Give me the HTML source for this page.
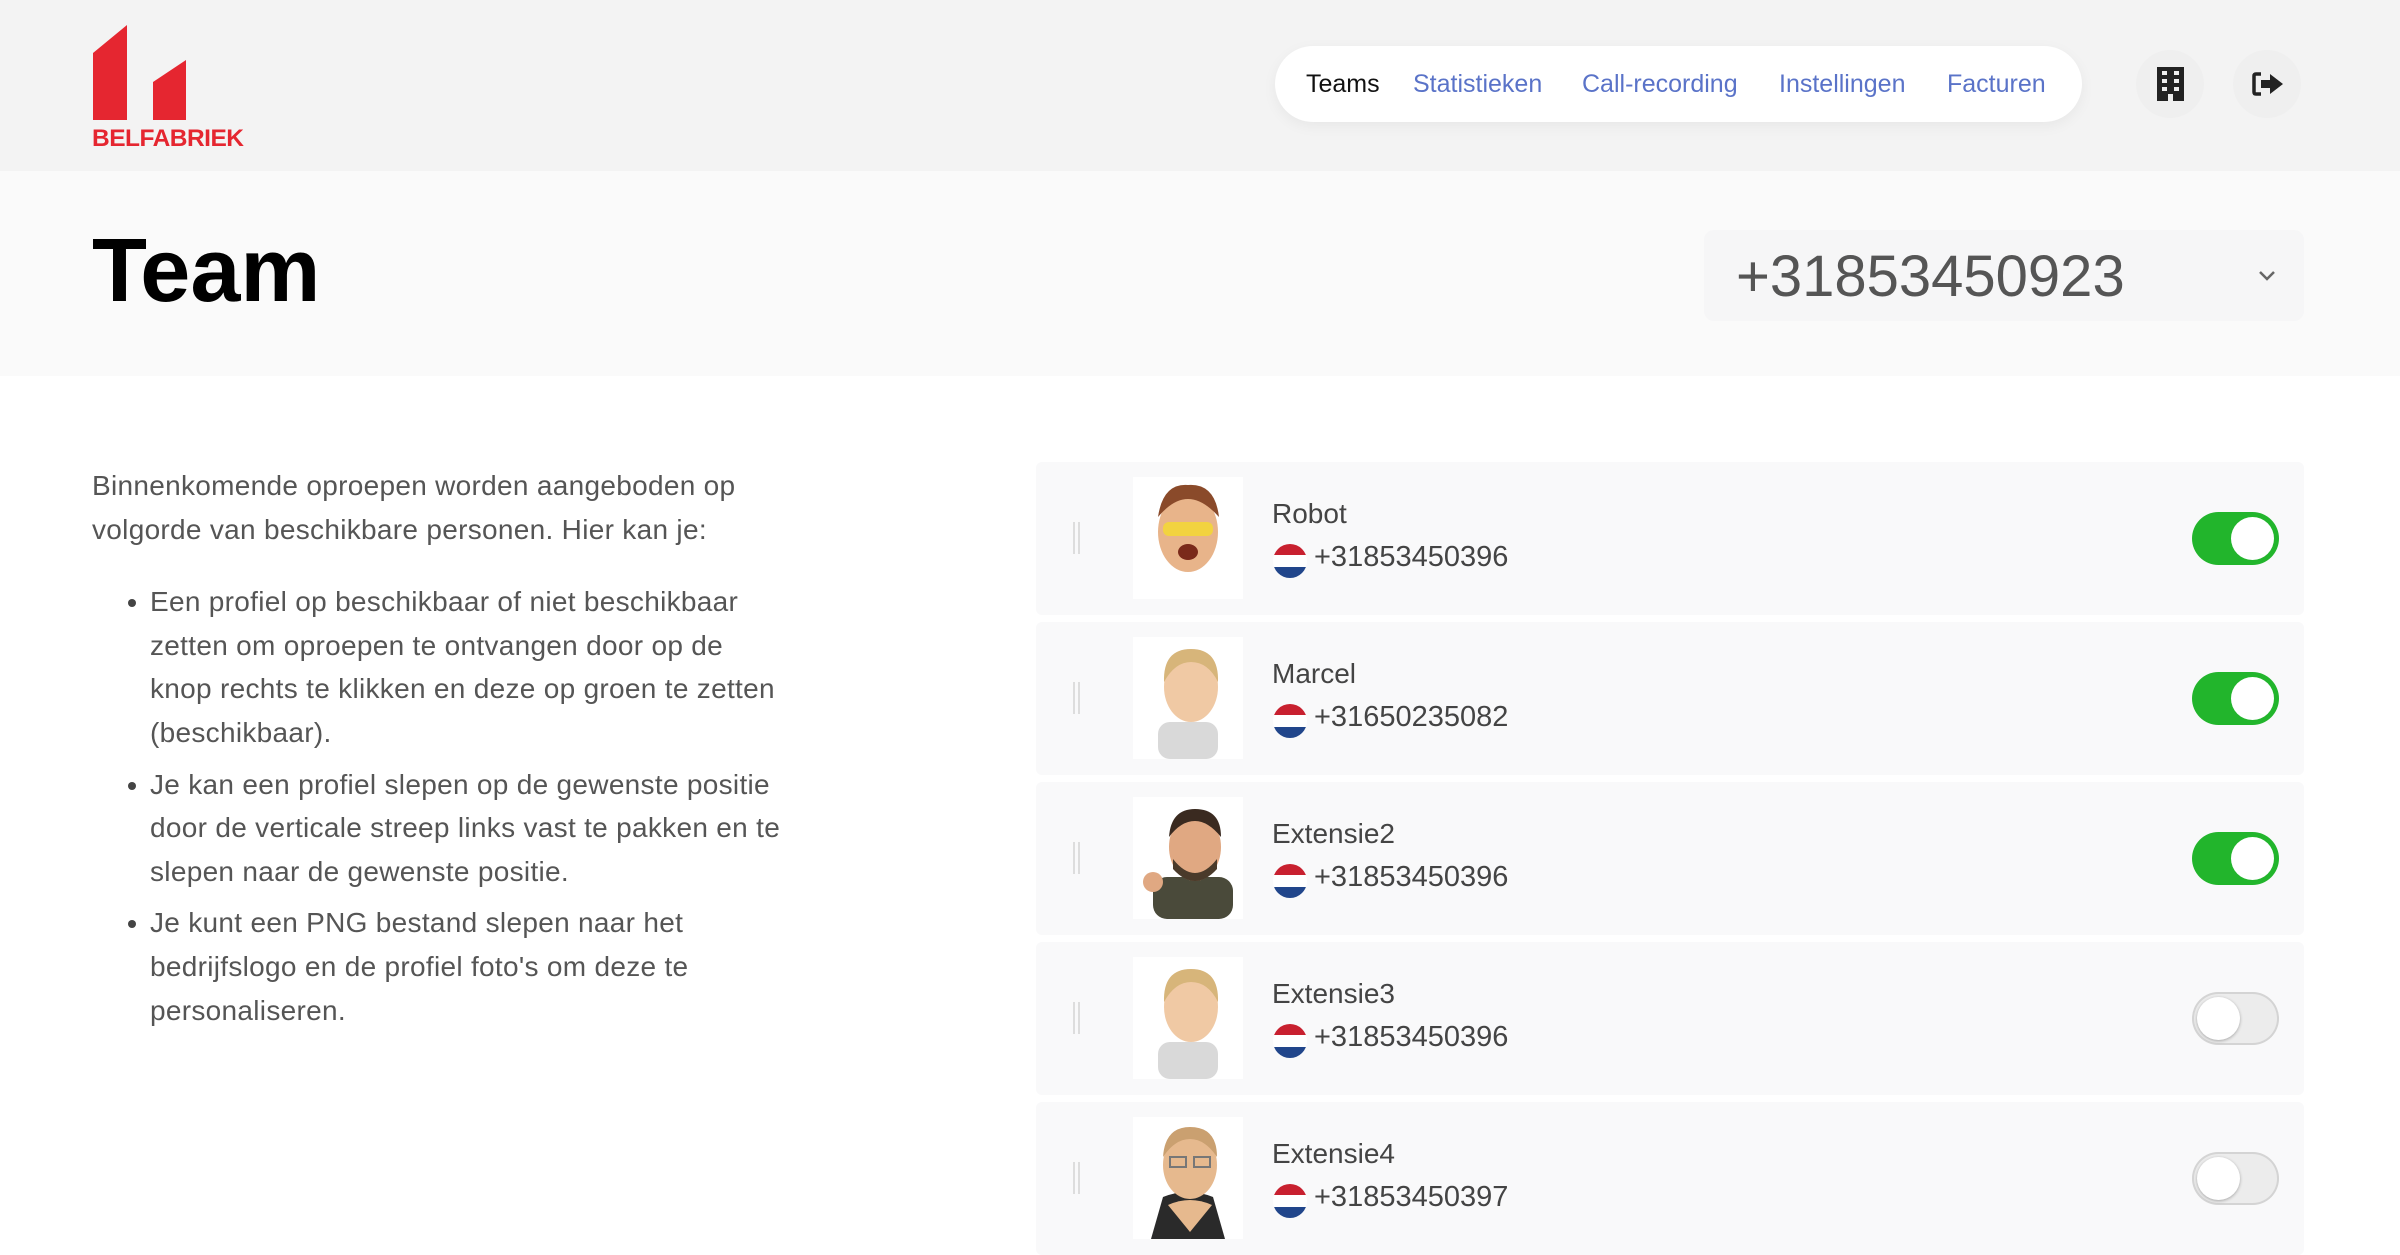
<!DOCTYPE html>
<html><head><meta charset="utf-8"><style>
*{margin:0;padding:0;box-sizing:border-box}
html,body{width:2400px;height:1255px;overflow:hidden;background:#fff;font-family:"Liberation Sans",sans-serif}
.hdr{position:absolute;left:0;top:0;width:2400px;height:171px;background:#f3f3f3}
.band{position:absolute;left:0;top:171px;width:2400px;height:205px;background:#fafafa}
.nav{position:absolute;left:1275px;top:46px;width:807px;height:76px;background:#fff;border-radius:38px;box-shadow:0 4px 14px rgba(0,0,0,.05)}
.nav span{position:absolute;top:24px;font-size:25px;color:#5a73c8;white-space:nowrap}
.ic{position:absolute;top:50px;width:68px;height:68px;border-radius:50%;background:#efefef}
.title{position:absolute;left:92px;top:220px;font-size:90px;font-weight:bold;color:#000;letter-spacing:0}
.dd{position:absolute;left:1704px;top:230px;width:600px;height:91px;background:#f6f6f7;border-radius:10px}
.dd span{position:absolute;left:32px;top:13px;font-size:58px;color:#555}
.txt{position:absolute;left:92px;top:464px;font-size:28px;letter-spacing:0.3px;line-height:43.6px;color:#555;white-space:nowrap}
.txt ul{margin-top:29px;padding-left:58px}
.txt li{margin-bottom:8px;list-style:none;position:relative}
.txt li:before{content:"";position:absolute;left:-22px;top:19px;width:8px;height:8px;border-radius:50%;background:#444}
.row{position:absolute;left:1036px;width:1268px;height:153px;background:#f9f9fa;border-radius:6px}
.row .h{position:absolute;left:37px;top:60px;width:7px;height:32px;border-left:2px solid #ddd;border-right:2px solid #ddd}
.row .av{position:absolute;left:97px;top:15px;width:110px;height:122px;background:#fff}
.row .nm{position:absolute;left:236px;top:36px;font-size:28px;color:#444}
.row .fl{position:absolute;left:237px;top:82px;width:34px;height:34px;border-radius:50%;background:linear-gradient(#c8202f 0 33%,#fff 33% 67%,#21468b 67%)}
.row .ph{position:absolute;left:278px;top:79px;font-size:29px;color:#444}
.tg{position:absolute;left:1156px;top:50px;width:87px;height:53px;border-radius:27px;background:#22b52c}
.tg:after{content:"";position:absolute;right:5px;top:5px;width:43px;height:43px;border-radius:50%;background:#fff}
.tg.off{background:#ececec;box-shadow:inset 0 0 0 2px #d4d4d4}
.tg.off:after{right:auto;left:5px;box-shadow:0 1px 3px rgba(0,0,0,.3)}
</style></head><body>
<div class="hdr"></div><div class="band"></div>
<svg style="position:absolute;left:0;top:0" width="260" height="160">
<polygon points="93,53 127,25 127,120 93,120" fill="#e52630"/>
<polygon points="153,82 186,60 186,120 153,120" fill="#e52630"/>
<text x="92" y="146" font-family="Liberation Sans" font-weight="bold" font-size="24.5" fill="#e52630" textLength="152">BELFABRIEK</text>
</svg>
<div class="nav">
<span style="left:31px;color:#111">Teams</span>
<span style="left:138px">Statistieken</span>
<span style="left:307px">Call-recording</span>
<span style="left:504px">Instellingen</span>
<span style="left:672px">Facturen</span>
</div>
<div class="ic" style="left:2136px"></div><div class="ic" style="left:2233px"></div>
<svg style="position:absolute;left:2157px;top:67px" width="27" height="34" viewBox="0 0 27 34"><rect x="0" y="0" width="27" height="34" fill="#222"/><g fill="#eee"><rect x="5" y="4" width="5" height="4"/><rect x="17" y="4" width="5" height="4"/><rect x="5" y="12" width="5" height="4"/><rect x="17" y="12" width="5" height="4"/><rect x="5" y="20" width="5" height="4"/><rect x="17" y="20" width="5" height="4"/><rect x="11" y="27" width="5" height="7"/></g></svg>
<svg style="position:absolute;left:2252px;top:72px" width="32" height="24" viewBox="0 0 32 24"><path d="M9 2H4Q2 2 2 4V20Q2 22 4 22H9" stroke="#222" stroke-width="3.5" fill="none"/><path d="M9 8H18V2L31 12L18 22V16H9Z" fill="#222"/></svg>
<div class="title">Team</div>
<div class="dd"><span>+31853450923</span>
<svg style="position:absolute;left:554px;top:40px" width="18" height="12"><path d="M2 2L9 9L16 2" stroke="#666" stroke-width="2.5" fill="none"/></svg></div>
<div class="txt">Binnenkomende oproepen worden aangeboden op<br>volgorde van beschikbare personen. Hier kan je:
<ul>
<li>Een profiel op beschikbaar of niet beschikbaar<br>zetten om oproepen te ontvangen door op de<br>knop rechts te klikken en deze op groen te zetten<br>(beschikbaar).</li>
<li>Je kan een profiel slepen op de gewenste positie<br>door de verticale streep links vast te pakken en te<br>slepen naar de gewenste positie.</li>
<li>Je kunt een PNG bestand slepen naar het<br>bedrijfslogo en de profiel foto's om deze te<br>personaliseren.</li>
</ul></div>

<div class="row" style="top:462px"><div class="h"></div><div class="av"><svg width="110" height="122"><ellipse cx="55" cy="55" rx="30" ry="40" fill="#e8b48a"/><path d="M25 40Q30 6 55 8Q82 6 86 40Q70 22 55 22Q40 22 25 40Z" fill="#8a4a2a"/><rect x="30" y="45" width="50" height="14" rx="6" fill="#f2d340"/><ellipse cx="55" cy="75" rx="10" ry="8" fill="#7a2a1a"/></svg></div><div class="nm">Robot</div><div class="fl"></div><div class="ph">+31853450396</div><div class="tg"></div></div>
<div class="row" style="top:622px"><div class="h"></div><div class="av"><svg width="110" height="122"><rect x="25" y="85" width="60" height="37" rx="12" fill="#d9d9d9"/><ellipse cx="58" cy="50" rx="27" ry="35" fill="#f0c9a4"/><path d="M31 45Q30 12 58 12Q86 12 85 45Q75 25 58 25Q42 25 31 45Z" fill="#d7b57a"/></svg></div><div class="nm">Marcel</div><div class="fl"></div><div class="ph">+31650235082</div><div class="tg"></div></div>
<div class="row" style="top:782px"><div class="h"></div><div class="av"><svg width="110" height="122"><rect x="20" y="80" width="80" height="42" rx="14" fill="#4a4a3a"/><ellipse cx="62" cy="50" rx="26" ry="34" fill="#e0a882"/><path d="M36 40Q38 12 62 12Q88 12 88 40Q75 24 62 24Q48 24 36 40Z" fill="#3a2a20"/><path d="M40 62Q62 90 84 62L84 72Q62 96 40 72Z" fill="#4a3a2a"/><circle cx="20" cy="85" r="10" fill="#e0a882"/></svg></div><div class="nm">Extensie2</div><div class="fl"></div><div class="ph">+31853450396</div><div class="tg"></div></div>
<div class="row" style="top:942px"><div class="h"></div><div class="av"><svg width="110" height="122"><rect x="25" y="85" width="60" height="37" rx="12" fill="#d9d9d9"/><ellipse cx="58" cy="50" rx="27" ry="35" fill="#f0c9a4"/><path d="M31 45Q30 12 58 12Q86 12 85 45Q75 25 58 25Q42 25 31 45Z" fill="#d7b57a"/></svg></div><div class="nm">Extensie3</div><div class="fl"></div><div class="ph">+31853450396</div><div class="tg off"></div></div>
<div class="row" style="top:1102px"><div class="h"></div><div class="av"><svg width="110" height="122"><path d="M18 122L30 80Q55 70 80 80L92 122Z" fill="#2a2a2a"/><ellipse cx="57" cy="48" rx="27" ry="34" fill="#e6b98e"/><path d="M30 40Q32 10 57 10Q84 10 84 40Q72 22 57 22Q42 22 30 40Z" fill="#caa070"/><rect x="37" y="40" width="16" height="10" fill="none" stroke="#777" stroke-width="2"/><rect x="61" y="40" width="16" height="10" fill="none" stroke="#777" stroke-width="2"/><path d="M35 88Q57 78 79 88L57 115Z" fill="#e6b98e"/></svg></div><div class="nm">Extensie4</div><div class="fl"></div><div class="ph">+31853450397</div><div class="tg off"></div></div>
</body></html>
